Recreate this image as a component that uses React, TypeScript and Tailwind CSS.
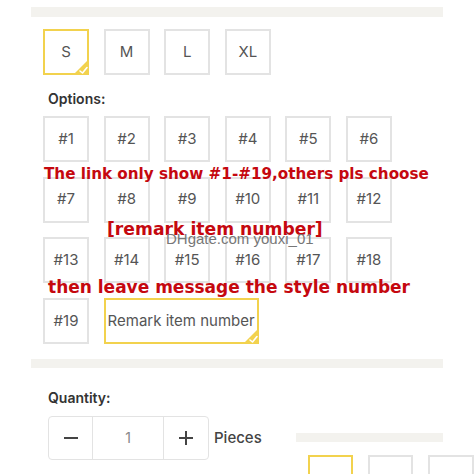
import React from "react";

const sans = "font-['Inter','Liberation_Sans',sans-serif]";

function Corner() {
  return (
    <span className="absolute -bottom-[2px] -right-[2px] w-[16px] h-[16px]">
      <svg width="16" height="16" viewBox="0 0 16 16">
        <polygon points="16,0 16,16 0,16" fill="#f2d24e" />
        <polyline points="7,12 9.5,14 14,8.5" fill="none" stroke="#fff" strokeWidth="1.6" strokeLinecap="round" strokeLinejoin="round" />
      </svg>
    </span>
  );
}

function Box({ label, selected = false, wide = false }: { label: string; selected?: boolean; wide?: boolean }) {
  return (
    <div
      className={`relative h-[46px] flex items-center justify-center border-2 text-[15px] text-[#555] ${sans} ${
        wide ? "w-[155px] col-span-3" : "w-[46px]"
      } ${selected ? "border-[#f2d24e]" : "border-[#e3e3e3]"}`}
    >
      {label}
      {selected && <Corner />}
    </div>
  );
}

export default function App() {
  const opts = Array.from({ length: 18 }, (_, i) => `#${i + 1}`);
  const red = "font-['DejaVu_Sans',sans-serif] font-bold text-[#c5080f] whitespace-nowrap absolute";

  return (
    <div className="relative w-[474px] h-[474px] bg-white overflow-hidden">
      <div className="mt-[7px] ml-[31px] w-[412px] h-[10px] bg-[#f3f2ee]" />

      <div className="mt-[12px] ml-[43px] flex gap-[14.6px]">
        <Box label="S" selected />
        <Box label="M" />
        <Box label="L" />
        <Box label="XL" />
      </div>

      <div className={`mt-[15px] ml-[48px] text-[14px] font-semibold text-[#333] leading-[18px] ${sans}`}>Options:</div>

      <div className="mt-[8px] ml-[43px] grid grid-cols-[repeat(6,46px)] gap-x-[14.6px] gap-y-[14.6px]">
        {opts.map((o) => (
          <Box key={o} label={o} />
        ))}
        <Box label="#19" />
        <Box label="Remark item number" selected wide />
      </div>

      <div className="mt-[15px] ml-[31px] w-[412px] h-[9px] bg-[#f3f2ee]" />

      <div className={`mt-[21px] ml-[48px] text-[14px] font-semibold text-[#333] leading-[18px] ${sans}`}>Quantity:</div>

      <div className="mt-[9px] ml-[48px] flex items-center">
        <div className="flex h-[44px] border border-[#e3e3e3] rounded-[4px]">
          <div className="w-[44px] flex items-center justify-center border-r border-[#e3e3e3]">
            <span className="w-[14px] h-[2px] bg-[#444]" />
          </div>
          <div className={`w-[71px] flex items-center justify-center border-r border-[#e3e3e3] text-[14px] text-[#888] ${sans}`}>1</div>
          <div className="w-[44px] flex items-center justify-center">
            <svg width="16" height="16" viewBox="0 0 16 16">
              <path d="M8 1v14M1 8h14" stroke="#444" strokeWidth="2" />
            </svg>
          </div>
        </div>
        <span className={`ml-[5px] text-[15px] font-medium text-[#444] ${sans}`}>Pieces</span>
        <div className="ml-auto mr-[31px] self-start mt-[17px] flex flex-col">
          <div className="w-[147px] h-[9px] bg-[#f3f2ee]" />
        </div>
      </div>

      <div className="ml-[308px] mt-[-5px] flex gap-[14.6px]">
        <div className="w-[45px] h-[30px] border-2 border-[#f2d24e]" />
        <div className="w-[46px] h-[30px] border-2 border-[#e3e3e3]" />
        <div className="w-[46px] h-[30px] border-2 border-[#e3e3e3]" />
      </div>

      <span className={`${red} left-[44px] top-[163px] text-[15.2px]`}>The link only show #1-#19,others pls choose</span>
      <span className={`${red} left-[107px] top-[217px] text-[17.2px]`}>[remark item number]</span>
      <span className={`absolute left-[166px] top-[228px] text-[15px] text-[#777] whitespace-nowrap font-['Liberation_Sans',sans-serif]`}>
        DHgate.com youxi_01
      </span>
      <span className={`${red} left-[48px] top-[275px] text-[17px]`}>then leave message the style number</span>
    </div>
  );
}
